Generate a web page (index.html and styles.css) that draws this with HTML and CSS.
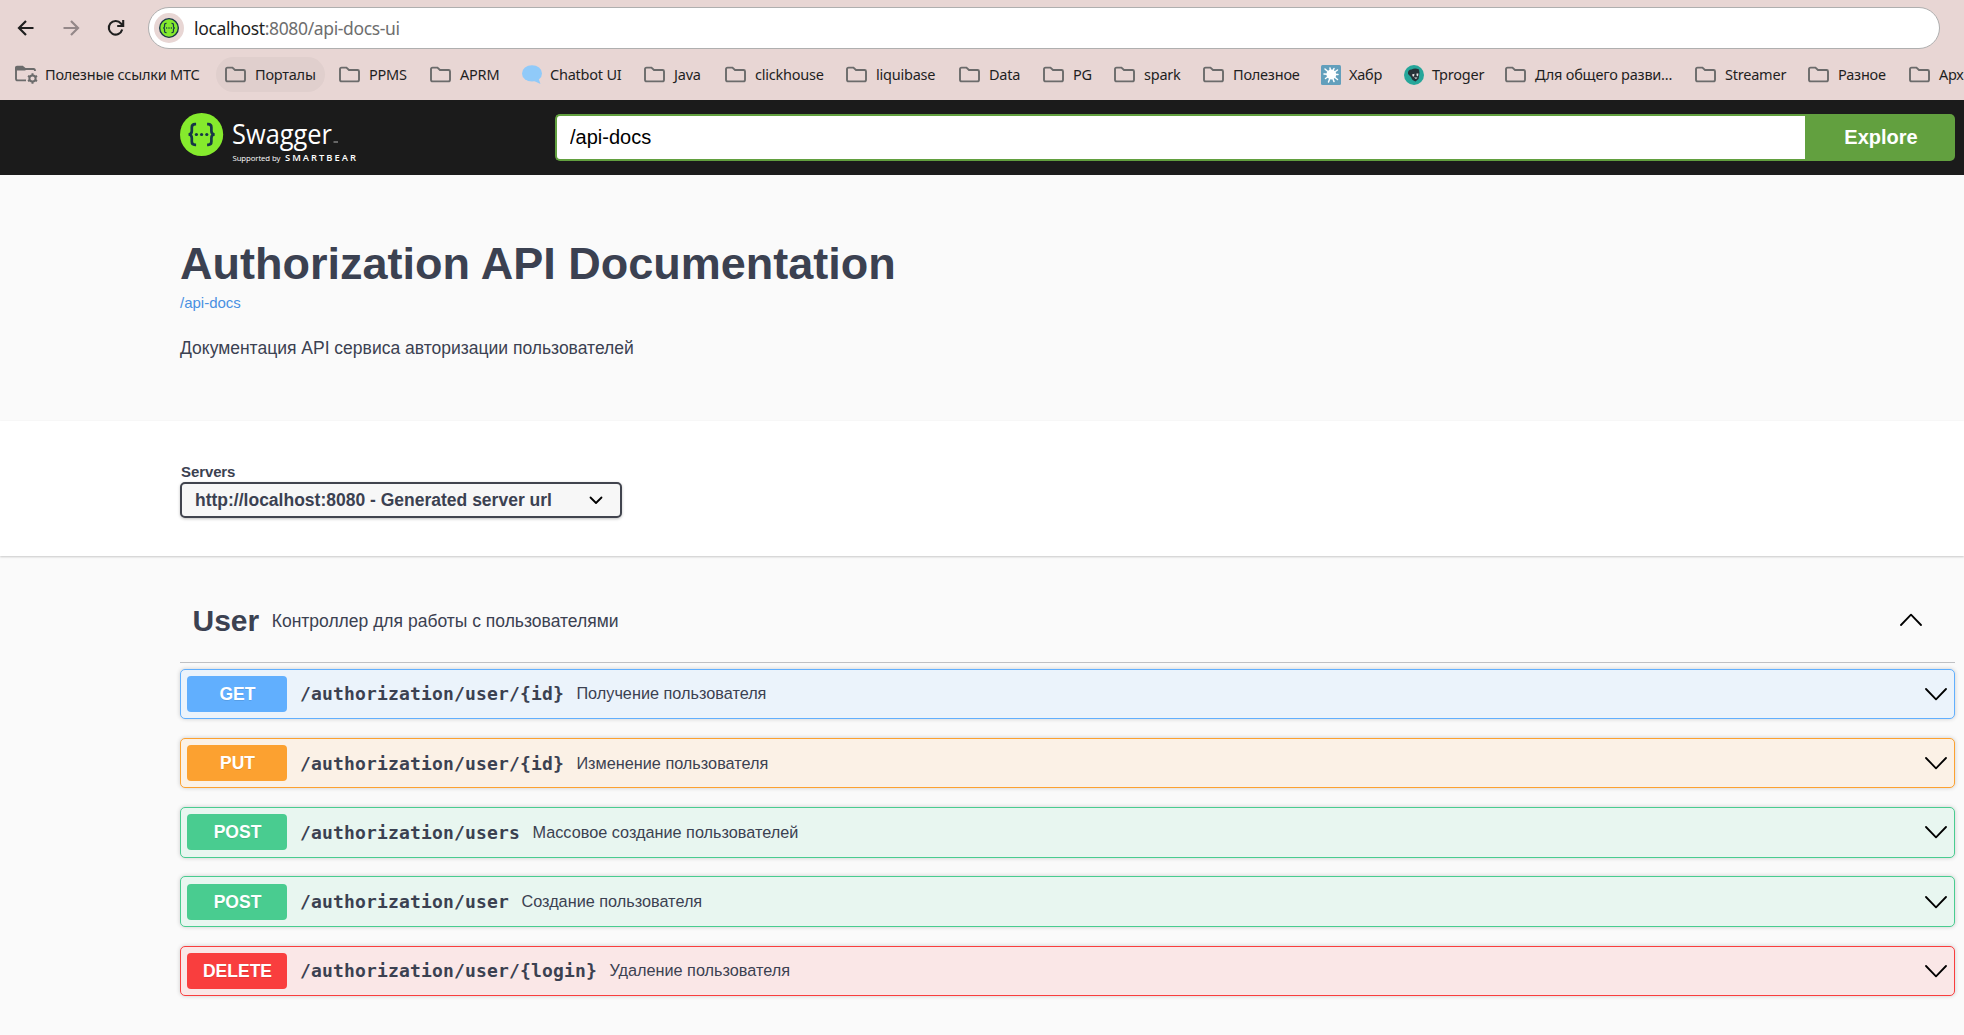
FILE: index.html
```html
<!DOCTYPE html>
<html lang="ru">
<head>
<meta charset="utf-8">
<title>Swagger UI</title>
<link rel="stylesheet" href="styles.css">
</head>
<body>
<svg class="defs" width="0" height="0">
  <symbol id="folder" viewBox="0 0 22 18"><path d="M1 3.2Q1 1.6 2.6 1.6H7.4L10 4H18.6Q20 4 20 5.4V13.8Q20 15.4 18.4 15.4H2.6Q1 15.4 1 13.8Z" fill="none" stroke="#6b6b6b" stroke-width="1.9"/></symbol>
  <symbol id="down" viewBox="0 0 22 13"><path d="M1 1L11 11.3L21 1" fill="none" stroke="#000" stroke-width="1.8" stroke-linecap="round" stroke-linejoin="round"/></symbol>
  <symbol id="braces" viewBox="0 0 44 44">
    <g fill="none" stroke="#173647" stroke-width="2.7"><path d="M16.5 11.7H15.5Q12.2 11.7 12.2 15V18.5Q12.2 21.8 9 22Q12.2 22.2 12.2 25.5V29Q12.2 32.3 15.5 32.3H16.5"/><path d="M27.5 11.7H28.5Q31.8 11.7 31.8 15V18.5Q31.8 21.8 35 22Q31.8 22.2 31.8 25.5V29Q31.8 32.3 28.5 32.3H27.5"/></g>
    <g fill="#173647"><circle cx="16.8" cy="22" r="1.6"/><circle cx="22" cy="22" r="1.6"/><circle cx="27.2" cy="22" r="1.6"/></g>
  </symbol>
</svg>

<header class="chrome">
  <div class="toolbar">
    <svg class="nav" viewBox="0 0 18 18"><path d="M16.5 9H2.5M9 2L2 9L9 16" fill="none" stroke="#1f1f1f" stroke-width="2.2"/></svg>
    <svg class="nav" viewBox="0 0 18 18"><path d="M1.5 9H15.5M9 2L16 9L9 16" fill="none" stroke="#948889" stroke-width="2.2"/></svg>
    <svg class="nav" viewBox="0 0 18 18"><path d="M15.2 10.5A6.8 6.8 0 1 1 14 4.6L15.8 6.4M16.2 1V7H10.2" fill="none" stroke="#1f1f1f" stroke-width="2.1"/></svg>
    <div class="address">
      <span class="favicon"><svg viewBox="0 0 44 44"><circle cx="22" cy="22" r="20.5" fill="#85ea2d" stroke="#173647" stroke-width="3"/><use href="#braces"/></svg></span>
      <span class="url">localhost<span class="url-rest">:8080/api-docs-ui</span></span>
    </div>
  </div>
  <nav class="bookmarks">
    <a><svg viewBox="0 0 24 20"><path d="M11 15.4H2.6Q1 15.4 1 13.8V3.2M10 4H18.6Q20 4 20 6" fill="none" stroke="#6b6b6b" stroke-width="1.9"/><path d="M0 5.5V2.6Q0 .7 2 .7H7.8L10.5 3V5.5Z" fill="#6b6b6b"/><circle cx="17.5" cy="13.5" r="3.1" fill="none" stroke="#6b6b6b" stroke-width="2"/><path d="M17.5 8.3V10M17.5 17V18.7M13 10.9L14.5 11.8M20.5 15.2L22 16.1M13 16.1L14.5 15.2M20.5 11.8L22 10.9" stroke="#6b6b6b" stroke-width="2"/></svg>Полезные ссылки МТС</a>
    <a class="hovered"><svg><use href="#folder"/></svg>Порталы</a>
    <a><svg><use href="#folder"/></svg>PPMS</a>
    <a><svg><use href="#folder"/></svg>APRM</a>
    <a class="site"><svg viewBox="0 0 20 20"><ellipse cx="10" cy="8.4" rx="10" ry="8.2" fill="#90caf9"/><path d="M10 15L18.5 19L16 12Z" fill="#90caf9"/></svg>Chatbot UI</a>
    <a><svg><use href="#folder"/></svg>Java</a>
    <a><svg><use href="#folder"/></svg>clickhouse</a>
    <a><svg><use href="#folder"/></svg>liquibase</a>
    <a><svg><use href="#folder"/></svg>Data</a>
    <a><svg><use href="#folder"/></svg>PG</a>
    <a><svg><use href="#folder"/></svg>spark</a>
    <a><svg><use href="#folder"/></svg>Полезное</a>
    <a class="site"><svg viewBox="0 0 20 20"><rect width="20" height="20" rx="1.5" fill="#629fbc"/><circle cx="10.300" cy="9.500" r="4.900" fill="#fff"/><path d="M10.300 9.500L4 4M10.300 9.500L9 3M10.300 9.500L13 3.500M10.300 9.500L16.500 5M10.300 9.500L17 9.500M10.300 9.500L16.500 14.500M10.300 9.500L13 16.500M10.300 9.500L7.500 17M10.300 9.500L4.500 13.500M10.300 9.500L3 9" stroke="#fff" stroke-width="1.500" stroke-linecap="round"/></svg>Хабр</a>
    <a class="site"><svg viewBox="0 0 20 20"><circle cx="10" cy="10" r="10" fill="#26a69a"/><path d="M4 9Q3.500 4.500 7.500 4.500Q11 2.500 15 4.500L15.500 8L14.500 14L11.500 16.500Q8 15.500 7 12Z" fill="#263238"/><path d="M8 9.500L10.500 8.800L10 11.500L8.800 11.500ZM12.500 8.500L14.500 8.500L14 11.500L12.500 10.500ZM10 12.500L13.500 12.500L12 14Z" fill="#e8e8e8"/></svg>Tproger</a>
    <a><svg><use href="#folder"/></svg>Для общего разви...</a>
    <a><svg><use href="#folder"/></svg>Streamer</a>
    <a><svg><use href="#folder"/></svg>Разное</a>
    <a><svg><use href="#folder"/></svg>Архив</a>
  </nav>
</header>

<div class="topbar">
  <svg class="logo" viewBox="0 0 190 52">
    <circle cx="21.600" cy="22.500" r="21.600" fill="#85ea2d"/>
    <use href="#braces" x="-.4" y=".5" width="44" height="44"/>
    <text class="logo-name" x="52" y="31.500" textLength="100" lengthAdjust="spacingAndGlyphs">Swagger</text>
    <path d="M153.500 30H158" stroke="#999" stroke-width="1.200"/>
    <text class="logo-by" x="52.500" y="48.800" textLength="48">Supported by</text>
    <text class="logo-owner" x="105" y="48.800" textLength="71">SMARTBEAR</text>
  </svg>
  <form class="explore">
    <input type="text" value="/api-docs" aria-label="URL">
    <button type="button">Explore</button>
  </form>
</div>

<section class="info">
  <h1>Authorization API Documentation</h1>
  <a class="spec-link">/api-docs</a>
  <p>Документация API сервиса авторизации пользователей</p>
</section>

<section class="servers">
  <span class="servers-title">Servers</span>
  <div class="select">http://localhost:8080 - Generated server url
    <svg viewBox="0 0 14 9"><path d="M1.500 1.500L7 7L12.500 1.500" fill="none" stroke="#000" stroke-width="1.800" stroke-linecap="round" stroke-linejoin="round"/></svg>
  </div>
</section>

<main class="operations">
  <div class="tag">
    <h2>User</h2>
    <span>Контроллер для работы с пользователями</span>
    <svg class="arrow up"><use href="#down"/></svg>
  </div>
  <div class="op get"><b>GET</b><code>/authorization/user/{id}</code><span>Получение пользователя</span><svg class="arrow"><use href="#down"/></svg></div>
  <div class="op put"><b>PUT</b><code>/authorization/user/{id}</code><span>Изменение пользователя</span><svg class="arrow"><use href="#down"/></svg></div>
  <div class="op post"><b>POST</b><code>/authorization/users</code><span>Массовое создание пользователей</span><svg class="arrow"><use href="#down"/></svg></div>
  <div class="op post"><b>POST</b><code>/authorization/user</code><span>Создание пользователя</span><svg class="arrow"><use href="#down"/></svg></div>
  <div class="op delete"><b>DELETE</b><code>/authorization/user/{login}</code><span>Удаление пользователя</span><svg class="arrow"><use href="#down"/></svg></div>
</main>
</body>
</html>
```

FILE: styles.css
```css
* { box-sizing: border-box; }

body {
  margin: 0;
  height: 1035px;
  overflow: hidden;
  background: #fafafa;
  color: #3b4151;
  font-family: "Liberation Sans", Arial, sans-serif;
}

.defs { display: block; height: 0; }

/* Browser chrome */
.chrome {
  height: 100px;
  padding-top: 7px;
  background: #e8d6d4;
  font-family: "Noto Sans", sans-serif;
}

.toolbar {
  display: flex;
  align-items: center;
  height: 42px;
  padding: 0 24px 0 17px;
}

.nav {
  flex: none;
  width: 18px;
  height: 18px;
  margin-right: 27px;
}

.address {
  display: flex;
  flex: 1;
  align-items: center;
  height: 42px;
  margin-left: -4px;
  padding-left: 5px;
  border: 1px solid #afafaf;
  border-radius: 21px;
  background: #fff;
}

.favicon {
  display: flex;
  align-items: center;
  justify-content: center;
  width: 30px;
  height: 30px;
  margin-right: 10px;
  border-radius: 50%;
  background: #e8d6d4;
}

.favicon svg { width: 20px; height: 20px; }

.url {
  font-size: 17.5px;
  letter-spacing: -0.36px;
  color: #1f1f1f;
}

.url-rest { color: #6e6e6e; }

.bookmarks {
  display: grid;
  grid-template-columns: 210px 114px 91px 91px 123px 81px 121px 113px 84px 71px 89px 117px 83px 102px 190px 113px 101px 110px;
  margin-top: 8px;
  padding-left: 6px;
  overflow: hidden;
}

.bookmarks a {
  display: flex;
  align-items: center;
  height: 35px;
  margin-right: 5px;
  padding: 0 0 2px 9px;
  border-radius: 18px;
  color: #1f1f1f;
  font-size: 14.5px;
  letter-spacing: -0.22px;
  white-space: nowrap;
}

.bookmarks .hovered { background: #e0cfcd; }

.bookmarks svg {
  flex: none;
  width: 22px;
  height: 18px;
  margin: 2px 8px 0 0;
}

.bookmarks a:first-child svg { width: 24px; height: 20px; margin-right: 6px; }

.bookmarks .site svg { width: 20px; height: 20px; margin-right: 8px; }
.bookmarks .site { padding-left: 10px; }

/* Swagger top bar */
.topbar {
  display: flex;
  align-items: center;
  justify-content: space-between;
  height: 75px;
  padding: 0 9px 0 180px;
  background: #1b1b1b;
}

.logo { width: 190px; height: 52px; }
.logo text { fill: #fff; font-family: "Open Sans", sans-serif; }
.logo .logo-name { font-size: 28px; }
.logo .logo-by { font-size: 7.8px; }
.logo .logo-owner { font-size: 9.4px; font-weight: 600; }

.explore { display: flex; width: 1400px; height: 47px; }

.explore input {
  flex: 1;
  padding: 0 13px;
  border: 2px solid #62a03f;
  border-right: 0;
  border-radius: 5px 0 0 5px;
  outline: 0;
  color: #000;
  font: 20px "Liberation Sans", Arial, sans-serif;
}

.explore button {
  width: 150px;
  padding: 0 0 0 2px;
  border: 0;
  border-radius: 0 5px 5px 0;
  background: #62a03f;
  color: #fff;
  font: bold 20px "Liberation Sans", Arial, sans-serif;
}

/* API info */
.info { height: 246px; padding: 63px 0 0 180px; }

.info h1 {
  margin: 0;
  font-size: 45px;
  line-height: 52px;
}

.spec-link {
  display: block;
  margin-top: 4px;
  color: #4990e2;
  font-size: 15px;
  line-height: 18px;
}

.info p { margin: 24px 0 0; font-size: 17.5px; line-height: 24px; }

/* Server selector */
.servers {
  height: 135px;
  padding: 41px 0 0 180px;
  background: #fff;
  box-shadow: 0 1px 2px rgba(0, 0, 0, .2);
}

.servers-title {
  display: block;
  margin-bottom: 1px;
  padding-left: 1px;
  font-size: 15px;
  font-weight: bold;
  line-height: 19px;
  letter-spacing: -.1px;
}

.select {
  display: flex;
  align-items: center;
  justify-content: space-between;
  width: 442px;
  height: 36px;
  padding: 0 17px 0 13px;
  border: 2px solid #41444e;
  border-radius: 5px;
  background: #f7f7f7;
  box-shadow: 0 1px 3px rgba(0, 0, 0, .25);
  font-size: 17.5px;
  font-weight: bold;
}

.select svg { width: 14px; height: 9px; }

/* Operations */
.operations { padding: 25px 9px 0 180px; }

.tag {
  display: flex;
  align-items: center;
  height: 82px;
  margin-bottom: 5.6px;
  padding: 0 33px 2px 12.5px;
  border-bottom: 1px solid #bfc0c3;
}

.tag h2 { margin: 0 12.5px 0 0; font-size: 30px; }
.tag span { padding-top: 1px; font-size: 17.5px; }

.arrow { width: 22px; height: 13px; margin-left: auto; }
.op .arrow { margin-top: 1px; }
.arrow.up { margin-bottom: 2px; transform: rotate(180deg); }

.op {
  display: flex;
  align-items: center;
  height: 50.5px;
  margin-bottom: 18.75px;
  padding: 0 7.5px 0 6px;
  border: 1px solid;
  border-radius: 5px;
  box-shadow: 0 0 4px rgba(0, 0, 0, .19);
}

.op b {
  width: 100px;
  height: 36px;
  padding-left: 1px;
  border-radius: 4px;
  color: #fff;
  font-size: 17.5px;
  line-height: 36px;
  text-align: center;
  text-shadow: 0 1px 0 rgba(0, 0, 0, .1);
}

.op code {
  margin: 0 12.5px 0 13px;
  font: bold 18px "DejaVu Sans Mono", monospace;
  letter-spacing: .16px;
}

.op span { font-size: 16.25px; }

.get { border-color: #61affe; background: #ebf3fb; }
.get b { background: #61affe; }
.put { border-color: #fca130; background: #fbf1e6; }
.put b { background: #fca130; }
.post { border-color: #49cc90; background: #e8f6f0; }
.post b { background: #49cc90; }
.delete { border-color: #f93e3e; background: #fae7e7; }
.delete b { background: #f93e3e; }
```
